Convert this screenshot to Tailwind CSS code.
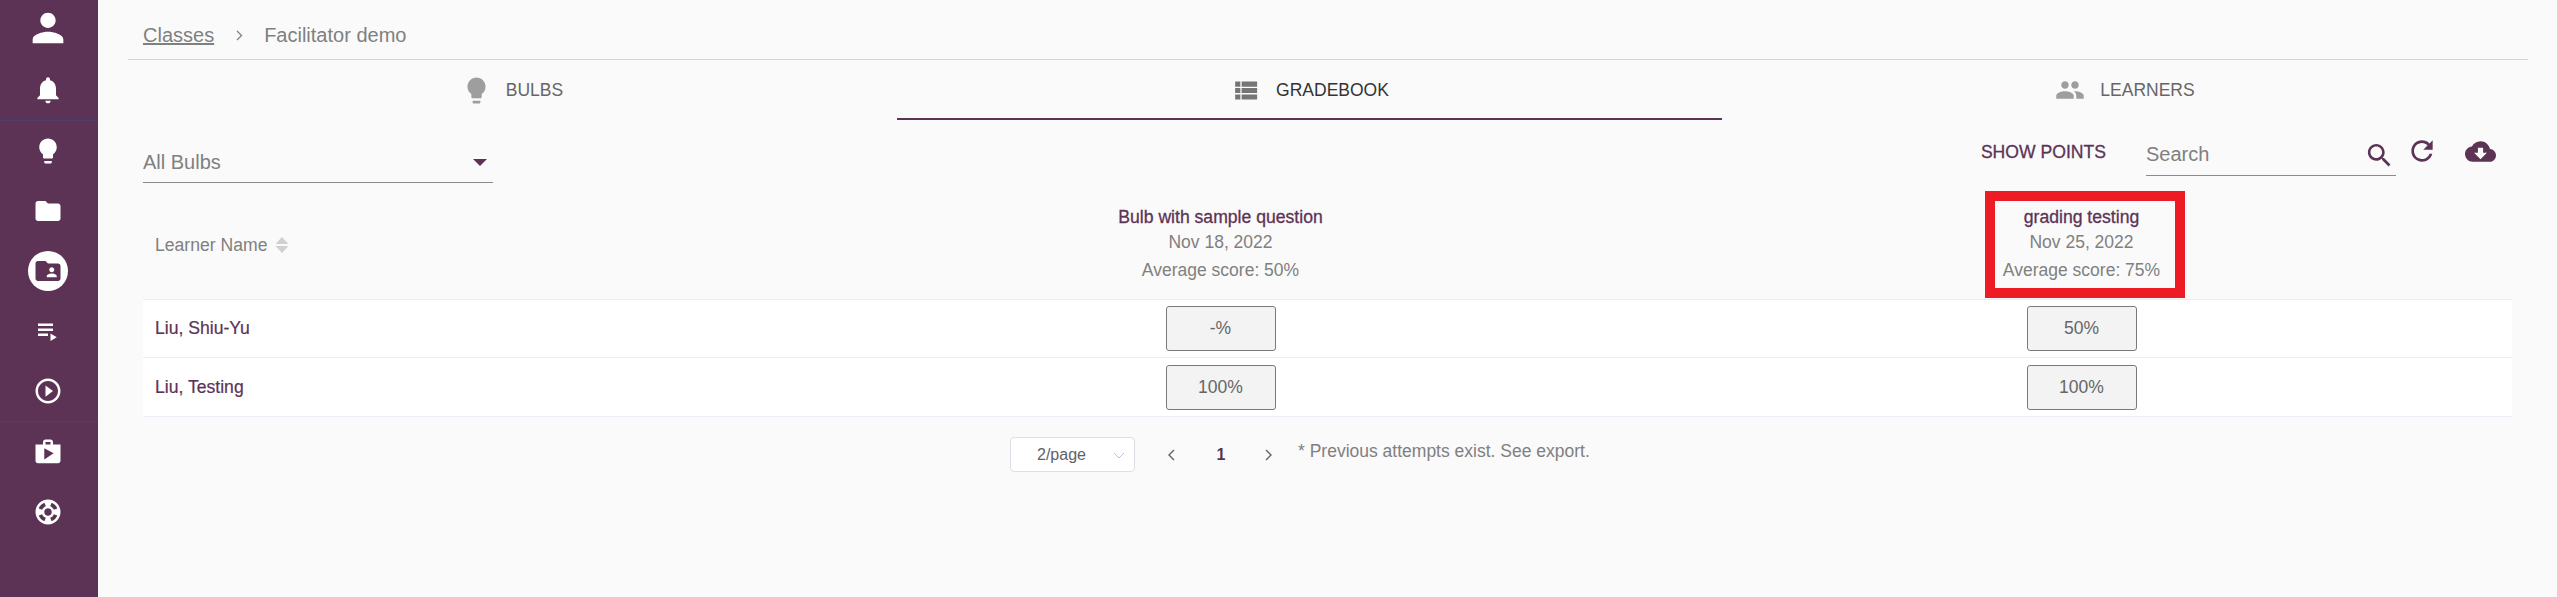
<!DOCTYPE html>
<html lang="en">
<head>
  <meta charset="UTF-8">
  <title>Gradebook</title>
  <script src="https://cdn.jsdelivr.net/npm/@tailwindcss/browser@4"></script>
</head>
<body class="bg-[#fafafa] font-['Liberation_Sans',Arial,sans-serif] overflow-hidden">
  <div class="flex h-[597px]">
    <!-- Sidebar -->
    <aside class="w-[98px] shrink-0 bg-[#5c3355] text-white">
      <div class="h-[121px] border-b border-[#4d3d70] pr-[2px]">
        <div class="h-[56px] flex items-center justify-center">
          <svg class="w-[46px] h-[46px] fill-current" viewBox="0 0 24 24"><path d="M12 12c2.21 0 4-1.79 4-4s-1.79-4-4-4-4 1.79-4 4 1.79 4 4 4zm0 2c-2.67 0-8 1.34-8 4v2h16v-2c0-2.66-5.33-4-8-4z"/></svg>
        </div>
        <div class="h-[60px] mt-1 flex items-center justify-center">
          <svg class="w-8 h-8 fill-current" viewBox="0 0 24 24"><path d="M12 22c1.1 0 2-.9 2-2h-4c0 1.1.89 2 2 2zm6-6v-5c0-3.07-1.64-5.64-4.5-6.32V4c0-.83-.67-1.5-1.5-1.5s-1.5.67-1.5 1.5v.68C7.63 5.36 6 7.92 6 11v5l-2 2v1h16v-1l-2-2z"/></svg>
        </div>
      </div>
      <div class="border-b border-[#4d3d70] pr-[2px]">
        <div class="h-[60px] flex items-center justify-center">
          <svg class="w-[30px] h-[30px] fill-current" viewBox="0 0 24 24"><path d="M9 21c0 .55.45 1 1 1h4c.55 0 1-.45 1-1v-1H9v1zm3-19C8.14 2 5 5.14 5 9c0 2.38 1.19 4.47 3 5.74V17c0 .55.45 1 1 1h6c.55 0 1-.45 1-1v-2.26c1.81-1.27 3-3.36 3-5.74 0-3.86-3.14-7-7-7z"/></svg>
        </div>
        <div class="h-[60px] flex items-center justify-center">
          <svg class="w-[30px] h-[30px] fill-current" viewBox="0 0 24 24"><path d="M10 4H4c-1.1 0-1.99.9-1.99 2L2 18c0 1.1.9 2 2 2h16c1.1 0 2-.9 2-2V8c0-1.1-.9-2-2-2h-8l-2-2z"/></svg>
        </div>
        <div class="h-[60px] flex items-center justify-center">
          <div class="w-10 h-10 rounded-full bg-white flex items-center justify-center text-[#5c3355]">
            <svg class="w-[30px] h-[30px] fill-current" viewBox="0 0 24 24"><path d="M20 6h-8l-2-2H4c-1.1 0-1.99.9-1.99 2L2 18c0 1.1.9 2 2 2h16c1.1 0 2-.9 2-2V8c0-1.1-.9-2-2-2zm-5 3c1.1 0 2 .9 2 2s-.9 2-2 2-2-.9-2-2 .9-2 2-2zm4 8h-8v-1c0-1.33 2.67-2 4-2s4 .67 4 2v1z"/></svg>
          </div>
        </div>
        <div class="h-[60px] flex items-center justify-center">
          <svg class="w-[30px] h-[30px] fill-current" viewBox="0 0 24 24"><path d="M4 10h12v2H4zm0-4h12v2H4zm0 8h8v2H4zm10 0v6l5-3z"/></svg>
        </div>
        <div class="h-[60px] flex items-center justify-center">
          <svg class="w-[30px] h-[30px] fill-current" viewBox="0 0 24 24"><path d="M10 16.5l6-4.5-6-4.5v9zM12 2C6.48 2 2 6.48 2 12s4.48 10 10 10 10-4.48 10-10S17.52 2 12 2zm0 18c-4.41 0-8-3.59-8-8s3.59-8 8-8 8 3.59 8 8-3.59 8-8 8z"/></svg>
        </div>
      </div>
      <div class="pr-[2px]">
        <div class="h-[60px] flex items-center justify-center">
          <svg class="w-[30px] h-[30px] fill-current" viewBox="0 0 24 24"><path d="M16 6V4c0-1.11-.89-2-2-2h-4c-1.11 0-2 .89-2 2v2H2v13c0 1.11.89 2 2 2h16c1.11 0 2-.89 2-2V6h-6zm-6-2h4v2h-4V4zM9 18V9l7.5 4L9 18z"/></svg>
        </div>
        <div class="h-[60px] flex items-center justify-center">
          <svg class="w-[30px] h-[30px] fill-current" viewBox="0 0 24 24"><path d="M12 2C6.48 2 2 6.48 2 12s4.48 10 10 10 10-4.48 10-10S17.52 2 12 2zm7.46 7.12l-2.78 1.15c-.51-1.36-1.58-2.44-2.95-2.94l1.15-2.78c2.1.8 3.77 2.47 4.58 4.57zM12 15c-1.66 0-3-1.34-3-3s1.34-3 3-3 3 1.34 3 3-1.34 3-3 3zM9.13 4.54l1.17 2.78c-1.38.5-2.47 1.59-2.98 2.97L4.54 9.13c.81-2.11 2.48-3.78 4.59-4.59zM4.54 14.87l2.78-1.15c.51 1.38 1.59 2.46 2.97 2.96l-1.17 2.78c-2.1-.81-3.77-2.48-4.58-4.59zm10.34 4.59l-1.15-2.78c1.37-.51 2.45-1.59 2.95-2.97l2.78 1.17c-.81 2.1-2.48 3.77-4.58 4.58z"/></svg>
        </div>
      </div>
    </aside>

    <!-- Main -->
    <main class="ml-[30px] w-[2400px]">
      <!-- Breadcrumb -->
      <div class="h-[60px] border-b border-[#d2d2d2] pl-[15px] pt-[23px] flex items-start text-[20px] leading-[24px] text-[#808080]">
        <a class="underline">Classes</a>
        <svg class="w-[18px] h-[24px] ml-[17px] mr-[15px]" viewBox="0 0 18 24" fill="none" stroke="#808080" stroke-width="1.3"><path d="M6 8l4.5 4.5L6 17"/></svg>
        <span>Facilitator demo</span>
      </div>

      <!-- Tabs -->
      <div class="grid grid-cols-[769px_825px_806px] h-[60px] text-[17.5px]">
        <div class="flex items-center justify-center text-[#666] pt-[2px] pb-[2px] pr-[1px]">
          <svg class="w-[31px] h-[31px] fill-[#9e9e9e] mr-[14px]" viewBox="0 0 24 24"><path d="M9 21c0 .55.45 1 1 1h4c.55 0 1-.45 1-1v-1H9v1zm3-19C8.14 2 5 5.14 5 9c0 2.38 1.19 4.47 3 5.74V17c0 .55.45 1 1 1h6c.55 0 1-.45 1-1v-2.26c1.81-1.27 3-3.36 3-5.74 0-3.86-3.14-7-7-7z"/></svg>
          BULBS
        </div>
        <div class="flex items-center justify-center text-[#333] pt-[2px] border-b-2 border-[#5c3355]">
          <svg class="w-[31px] h-[31px] fill-[#757575] mr-[15px]" viewBox="0 0 24 24"><path d="M4 14h4v-4H4v4zm0 5h4v-4H4v4zm0-10h4V5H4v4zm5 5h12v-4H9v4zm0 5h12v-4H9v4zM9 5v4h12V5H9z"/></svg>
          GRADEBOOK
        </div>
        <div class="flex items-center justify-center text-[#666] pt-[2px] pb-[2px]">
          <svg class="w-[30px] h-[30px] fill-[#9e9e9e] mr-[15px]" viewBox="0 0 24 24"><path d="M16 11c1.66 0 2.99-1.34 2.99-3S17.66 5 16 5c-1.66 0-3 1.34-3 3s1.34 3 3 3zm-8 0c1.66 0 2.99-1.34 2.99-3S9.66 5 8 5C6.34 5 5 6.34 5 8s1.34 3 3 3zm0 2c-2.33 0-7 1.17-7 3.5V19h14v-2.5c0-2.33-4.67-3.5-7-3.5zm8 0c-.29 0-.62.02-.97.05 1.16.84 1.97 1.97 1.97 3.45V19h6v-2.5c0-2.33-4.67-3.5-7-3.5z"/></svg>
          LEARNERS
        </div>
      </div>

      <!-- Toolbar -->
      <div class="h-[71px] pl-[15px] flex justify-between items-start">
        <div class="mt-[28px] w-[350px] h-[35px] border-b border-[#8a8a8a] flex items-center justify-between pr-[6px] pb-[6px] text-[20px] text-[#808080]">
          <span>All Bulbs</span>
          <span class="w-0 h-0 border-x-[7px] border-x-transparent border-t-[7px] border-t-[#5c3355]"></span>
        </div>
        <div class="flex items-start mr-[32px]">
          <span class="mt-[22px] text-[17.6px] leading-[20px] text-[#5c3355] [-webkit-text-stroke:0.3px]">SHOW POINTS</span>
          <div class="ml-[40px] mt-[16px] w-[250px] h-[40px] border-b border-[#8a8a8a] flex items-center justify-between pr-[1px] pb-[4px] text-[20px] text-[#808080]">
            <span>Search</span>
            <svg class="w-[31px] h-[31px] mt-[3px] fill-[#5c3355]" viewBox="0 0 24 24"><path d="M15.5 14h-.79l-.28-.27C15.41 12.59 16 11.11 16 9.5 16 5.91 13.09 3 9.5 3S3 5.91 3 9.5 5.91 16 9.5 16c1.61 0 3.09-.59 4.23-1.57l.27.28v.79l5 4.99L20.49 19l-4.99-5zm-6 0C7.01 14 5 11.99 5 9.5S7.01 5 9.5 5 14 7.01 14 9.5 11.99 14 9.5 14z"/></svg>
          </div>
          <svg class="w-8 h-8 ml-[10px] mt-[15px] fill-[#5c3355]" viewBox="0 0 24 24"><path d="M17.65 6.35C16.2 4.9 14.21 4 12 4c-4.42 0-7.99 3.58-7.99 8s3.57 8 7.99 8c3.73 0 6.84-2.55 7.73-6h-2.08c-.82 2.33-3.04 4-5.65 4-3.31 0-6-2.69-6-6s2.69-6 6-6c1.66 0 3.14.69 4.22 1.78L13 11h7V4l-2.35 2.35z"/></svg>
          <svg class="w-[31px] h-[31px] ml-[27px] mt-[16px] fill-[#5c3355]" viewBox="0 0 24 24"><path d="M19.35 10.04C18.67 6.59 15.64 4 12 4 9.11 4 6.6 5.64 5.35 8.04 2.34 8.36 0 10.91 0 14c0 3.31 2.69 6 6 6h13c2.76 0 5-2.24 5-5 0-2.64-2.05-4.78-4.65-4.96zM17 13l-5 5-5-5h3V9h4v4h3z"/></svg>
        </div>
      </div>

      <!-- Table -->
      <div class="ml-[15px] w-[2369px]">
        <div class="grid grid-cols-[647px_861px_861px] h-[109px] border-b border-[#ebeef5]">
          <div class="flex items-center pl-[12px] text-[17.6px] text-[#808080]">
            Learner Name
            <svg class="w-[14px] h-[20px] ml-[8px]" viewBox="0 0 14 20" fill="#d0d0d0"><path d="M7 2l6.5 7H.5zM7 18l6.5-7H.5z"/></svg>
          </div>
          <div class="text-center pt-[15px] text-[17.5px] text-[#808080]">
            <div class="leading-[22px] text-[17.6px] text-[#5c3355] [-webkit-text-stroke:0.3px]">Bulb with sample question</div>
            <div class="leading-[25px] mt-[2px]">Nov 18, 2022</div>
            <div class="leading-[25px] mt-[3px]">Average score: 50%</div>
          </div>
          <div class="relative text-center pt-[15px] text-[17.5px] text-[#808080]">
            <div class="leading-[22px] text-[17.6px] text-[#5c3355] [-webkit-text-stroke:0.3px]">grading testing</div>
            <div class="leading-[25px] mt-[2px]">Nov 25, 2022</div>
            <div class="leading-[25px] mt-[3px]">Average score: 75%</div>
            <div class="absolute left-[334px] top-0 w-[200px] h-[107px] border-10 border-[#ed1c24]"></div>
          </div>
        </div>
        <div class="grid grid-cols-[647px_861px_861px] items-center bg-white border-b border-[#ebeef5] pt-[6px] pb-[6px]">
          <div class="pl-[12px] text-[17.6px] text-[#5c3355] [-webkit-text-stroke:0.2px]">Liu, Shiu-Yu</div>
          <div class="flex justify-center"><div class="w-[110px] h-[45px] bg-[#f3f3f3] border border-[#7a7a7a] rounded-[3px] flex items-center justify-center text-[17.5px] text-[#666]">-%</div></div>
          <div class="flex justify-center"><div class="w-[110px] h-[45px] bg-[#f3f3f3] border border-[#7a7a7a] rounded-[3px] flex items-center justify-center text-[17.5px] text-[#666]">50%</div></div>
        </div>
        <div class="grid grid-cols-[647px_861px_861px] items-center bg-white border-b border-[#ebeef5] pt-[7px] pb-[6px]">
          <div class="pl-[12px] text-[17.6px] text-[#5c3355] [-webkit-text-stroke:0.2px]">Liu, Testing</div>
          <div class="flex justify-center"><div class="w-[110px] h-[45px] bg-[#f3f3f3] border border-[#7a7a7a] rounded-[3px] flex items-center justify-center text-[17.5px] text-[#666]">100%</div></div>
          <div class="flex justify-center"><div class="w-[110px] h-[45px] bg-[#f3f3f3] border border-[#7a7a7a] rounded-[3px] flex items-center justify-center text-[17.5px] text-[#666]">100%</div></div>
        </div>

        <!-- Pagination -->
        <div class="flex items-start pl-[867px] pt-[20px]">
          <div class="w-[125px] h-[35px] bg-white border border-[#dcdfe6] rounded-[4px] flex items-center justify-between pl-[26px] pr-[9px] text-[16px] text-[#606266]">
            <span>2/page</span>
            <svg class="w-[12px] h-[12px]" viewBox="0 0 12 12" fill="none" stroke="#c0c4cc" stroke-width="1"><path d="M1 4l5 5 5-5"/></svg>
          </div>
          <div class="ml-[13px] h-[35px] flex items-center text-[16px]">
            <div class="w-[48px] flex justify-center"><svg class="w-[12px] h-[14px]" viewBox="0 0 12 14" fill="none" stroke="#606266" stroke-width="1.4"><path d="M8 2L3 7l5 5"/></svg></div>
            <div class="w-[48px] pl-[2px] text-center font-bold text-[#5c3355]">1</div>
            <div class="w-[48px] flex justify-center"><svg class="w-[12px] h-[14px]" viewBox="0 0 12 14" fill="none" stroke="#606266" stroke-width="1.4"><path d="M4 2l5 5-5 5"/></svg></div>
          </div>
          <span class="ml-[6px] mt-[3px] text-[17.5px] leading-[22px] text-[#808080]">* Previous attempts exist. See export.</span>
        </div>
      </div>
    </main>
  </div>
</body>
</html>
